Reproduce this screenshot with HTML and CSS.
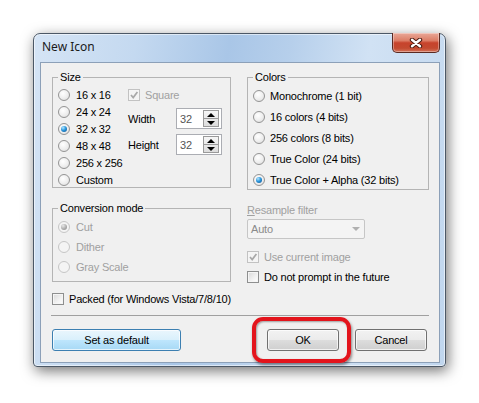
FILE: index.html
```html
<!DOCTYPE html>
<html lang="en">
<head>
    <meta charset="UTF-8">
    <meta name="viewport" content="width=device-width, initial-scale=1.0">
    <title>New Icon</title>
    <link rel="stylesheet" href="styles.css">
</head>
<body>
    <div class="window">
        <div class="titlebar">
            <span class="title">New Icon</span>
            <button class="close-button" aria-label="Close">
                <svg width="14" height="10" viewBox="0 0 14 10">
                    <path d="M3 1.8 L11 8.2 M11 1.8 L3 8.2" stroke="#4a1a10" stroke-width="4.4" stroke-linecap="round"/>
                    <path d="M3 1.8 L11 8.2 M11 1.8 L3 8.2" stroke="#fff" stroke-width="2.4" stroke-linecap="round"/>
                </svg>
            </button>
        </div>

        <div class="client">
            <div class="columns">
                <div class="col-left">
                    <fieldset class="group size-group">
                        <legend>Size</legend>
                        <div class="size-body">
                            <div class="radio-list">
                                <label class="radio"><span class="dot"></span>16 x 16</label>
                                <label class="radio"><span class="dot"></span>24 x 24</label>
                                <label class="radio"><span class="dot checked"></span>32 x 32</label>
                                <label class="radio"><span class="dot"></span>48 x 48</label>
                                <label class="radio"><span class="dot"></span>256 x 256</label>
                                <label class="radio"><span class="dot"></span>Custom</label>
                            </div>
                            <div class="size-fields">
                                <label class="check disabled">
                                    <span class="box"><svg width="10" height="10" viewBox="0 0 10 10"><path d="M2 5 L4.2 7.6 L8.4 2" fill="none" stroke="#a8a8a8" stroke-width="1.7"/></svg></span>
                                    Square
                                </label>
                                <div class="field-row">
                                    <span class="field-label">Width</span>
                                    <div class="spin">
                                        <span class="spin-value">32</span>
                                        <span class="spin-buttons"><i class="arrow-up"></i><i class="arrow-down"></i></span>
                                    </div>
                                </div>
                                <div class="field-row">
                                    <span class="field-label">Height</span>
                                    <div class="spin">
                                        <span class="spin-value">32</span>
                                        <span class="spin-buttons"><i class="arrow-up"></i><i class="arrow-down"></i></span>
                                    </div>
                                </div>
                            </div>
                        </div>
                    </fieldset>

                    <fieldset class="group conversion-group">
                        <legend>Conversion mode</legend>
                        <label class="radio disabled"><span class="dot checked"></span>Cut</label>
                        <label class="radio disabled"><span class="dot"></span>Dither</label>
                        <label class="radio disabled"><span class="dot"></span>Gray Scale</label>
                    </fieldset>

                    <label class="check packed"><span class="box"></span>Packed (for Windows Vista/7/8/10)</label>
                </div>

                <div class="col-right">
                    <fieldset class="group colors-group">
                        <legend>Colors</legend>
                        <label class="radio"><span class="dot"></span>Monochrome (1 bit)</label>
                        <label class="radio"><span class="dot"></span>16 colors (4 bits)</label>
                        <label class="radio"><span class="dot"></span>256 colors (8 bits)</label>
                        <label class="radio"><span class="dot"></span>True Color (24 bits)</label>
                        <label class="radio"><span class="dot checked"></span>True Color + Alpha (32 bits)</label>
                    </fieldset>

                    <div class="resample">
                        <div class="resample-label"><u>R</u>esample filter</div>
                        <div class="combo">
                            <span>Auto</span>
                            <i class="combo-arrow"></i>
                        </div>
                        <label class="check disabled current-image">
                            <span class="box"><svg width="10" height="10" viewBox="0 0 10 10"><path d="M2 5 L4.2 7.6 L8.4 2" fill="none" stroke="#a8a8a8" stroke-width="1.7"/></svg></span>
                            Use current image
                        </label>
                        <label class="check no-prompt"><span class="box"></span>Do not prompt in the future</label>
                    </div>
                </div>
            </div>

            <div class="separator"></div>

            <div class="buttons">
                <button class="btn btn-default">Set as default</button>
                <div class="buttons-right">
                    <div class="ok-wrap">
                        <button class="btn">OK</button>
                        <span class="highlight"></span>
                    </div>
                    <button class="btn">Cancel</button>
                </div>
            </div>
        </div>
    </div>
</body>
</html>
```

FILE: styles.css
```css
* {
    margin: 0;
    padding: 0;
    box-sizing: border-box;
}

html, body {
    height: 403px;
    overflow: hidden;
}

body {
    background: #fff;
    padding: 33px 0 0 33px;
    font-family: 'Liberation Sans', Arial, sans-serif;
    font-size: 11px;
    letter-spacing: -0.2px;
    color: #000;
}

/* window frame */
.window {
    width: 413px;
    height: 334px;
    border: 1px solid #4c5866;
    border-radius: 7px 7px 4px 4px;
    padding: 0 5px 3px 6px;
    background: linear-gradient(100deg, #d5e4f5 0%, #c4d9f0 22%, #a9c6e7 42%, #b6cfeb 55%, #d1e2f4 72%, #c0d6ee 100%);
    box-shadow: 2px 4px 14px rgba(0, 0, 0, 0.55), inset 0 0 0 1px rgba(255, 255, 255, 0.55);
}

.titlebar {
    height: 28px;
    display: flex;
    justify-content: space-between;
    align-items: flex-start;
}

.title {
    font-family: 'Noto Sans', 'Open Sans', sans-serif;
    font-size: 12px;
    letter-spacing: 0;
    line-height: 26px;
    padding-left: 2px;
    color: #1a1a1a;
}

.close-button {
    width: 48px;
    height: 20px;
    margin-top: -1px;
    border: 1px solid #5a2a22;
    border-top: none;
    border-radius: 0 0 5px 5px;
    background: linear-gradient(#e9a898 0%, #dc7d66 40%, #c7432c 52%, #c34a30 80%, #d4735a 100%);
    box-shadow: inset 0 0 0 1px rgba(255, 255, 255, 0.35);
    display: flex;
    align-items: center;
    justify-content: center;
}

.client {
    height: 301px;
    border: 1px solid #8ca0b8;
    background: #f0f0f0;
    padding: 8px 10px 0 11px;
}

.columns {
    display: flex;
    gap: 16px;
}

.col-left {
    width: 179px;
}

.col-right {
    width: 182px;
}

/* group boxes */
.group {
    border: 1px solid #b4b4b4;
    padding: 3px 4px 0 5px;
    margin: 0;
}

.group legend {
    line-height: 12px;
    padding: 0 2px;
}

.size-group {
    height: 117px;
}

.conversion-group {
    height: 80px;
    margin-top: 14px;
}

.colors-group {
    height: 119px;
    padding-top: 2px;
}

.size-body {
    display: flex;
}

.radio-list {
    width: 70px;
}

.radio {
    display: flex;
    align-items: center;
    gap: 6px;
    height: 17px;
    white-space: nowrap;
}

.colors-group .radio {
    height: 21px;
    gap: 5px;
}

.conversion-group .radio {
    height: 20px;
}

.disabled {
    color: #a0a0a0;
}

.dot {
    width: 12px;
    height: 12px;
    border-radius: 50%;
    border: 1px solid #949494;
    background: radial-gradient(circle at 40% 35%, #fff 0%, #eeeeee 55%, #d6d6d6 100%);
    display: flex;
    align-items: center;
    justify-content: center;
    flex-shrink: 0;
}

.dot.checked::after {
    content: "";
    width: 6px;
    height: 6px;
    border-radius: 50%;
    background: radial-gradient(circle at 35% 30%, #b5e6ff 0%, #2b97dc 45%, #0b4b8c 100%);
}

.disabled .dot {
    border-color: #c6c6c6;
    background: #f4f4f4;
}

.disabled .dot.checked::after {
    background: radial-gradient(circle at 35% 30%, #e8e8e8 0%, #a8a8a8 60%, #8c8c8c 100%);
}

/* checkboxes */
.check {
    display: flex;
    align-items: center;
    gap: 5px;
    height: 15px;
    white-space: nowrap;
}

.box {
    width: 12px;
    height: 12px;
    border: 1px solid #8e8f8f;
    background: linear-gradient(135deg, #d8d8d8 0%, #f2f2f2 60%, #fff 100%);
    box-shadow: inset 0 0 0 1px #f5f5f5;
    display: flex;
    align-items: center;
    justify-content: center;
    flex-shrink: 0;
}

.check.disabled .box {
    border-color: #c2c2c2;
    background: #f4f4f4;
}

.size-fields .check {
    height: 17px;
}

.field-row {
    display: flex;
    align-items: center;
    margin-top: 5px;
}

.field-label {
    width: 48px;
}

.spin {
    width: 46px;
    height: 21px;
    border: 1px solid #abadb3;
    background: #fff;
    display: flex;
    align-items: center;
    justify-content: space-between;
    padding: 1px;
}

.spin-value {
    padding-left: 2px;
    color: #555;
}

.spin-buttons {
    width: 16px;
    height: 17px;
    display: flex;
    flex-direction: column;
    border: 1px solid #9a9a9a;
    background: linear-gradient(#f6f6f6, #dcdcdc);
    margin-right: 1px;
}

.spin-buttons i {
    flex: 1;
    display: flex;
    align-items: center;
    justify-content: center;
}

.spin-buttons i.arrow-up {
    border-bottom: 1px solid #9a9a9a;
}

.arrow-up::after {
    content: "";
    border-left: 4px solid transparent;
    border-right: 4px solid transparent;
    border-bottom: 4px solid #000;
}

.arrow-down::after {
    content: "";
    border-left: 4px solid transparent;
    border-right: 4px solid transparent;
    border-top: 4px solid #000;
}

.packed {
    margin-top: 9px;
    gap: 5px;
}

/* resample area */
.resample {
    margin-top: 14px;
}

.resample-label {
    line-height: 12px;
    color: #a0a0a0;
}

.combo {
    width: 118px;
    height: 20px;
    margin-top: 3px;
    border: 1px solid #c6c6c6;
    border-radius: 2px;
    background: #f4f4f4;
    color: #8a8a8a;
    display: flex;
    align-items: center;
    justify-content: space-between;
    padding: 0 4px 0 3px;
}

.combo-arrow {
    border-left: 4px solid transparent;
    border-right: 4px solid transparent;
    border-top: 4px solid #b0b0b0;
}

.current-image {
    margin-top: 10px;
}

.no-prompt {
    margin-top: 5px;
}

.separator {
    height: 1px;
    margin: 9px 0 0 -1px;
    background: #a0a0a0;
}

/* buttons */
.buttons {
    display: flex;
    justify-content: space-between;
    margin-top: 13px;
    padding-right: 2px;
}

.buttons-right {
    display: flex;
    gap: 16px;
}

.btn {
    width: 72px;
    height: 22px;
    font-family: 'Liberation Sans', Arial, sans-serif;
    font-size: 11px;
    letter-spacing: -0.2px;
    color: #000;
    border: 1px solid #707070;
    border-radius: 3px;
    background: linear-gradient(#f2f2f2 0%, #ebebeb 49%, #dddddd 50%, #cfcfcf 100%);
    box-shadow: inset 0 0 0 1px rgba(255, 255, 255, 0.7);
}

.btn-default {
    width: 129px;
    border-color: #3c7fb1;
    background: linear-gradient(#eaf6fd 0%, #d9f0fc 49%, #bee6fd 50%, #a7d9f5 100%);
}

.ok-wrap {
    position: relative;
}

/* red annotation drawn over the OK button */
.highlight {
    position: absolute;
    left: -15px;
    top: -12px;
    width: 99px;
    height: 46px;
    border: 4px solid #e3141c;
    border-radius: 11px;
    box-shadow: 1px 2px 3px rgba(0, 0, 0, 0.45), inset 1px 1px 2px rgba(0, 0, 0, 0.35);
}
```
